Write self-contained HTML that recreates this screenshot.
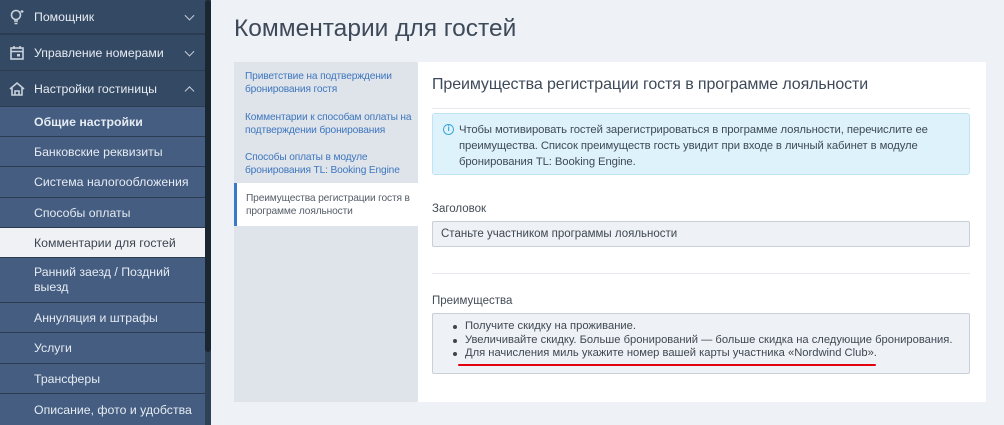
<!DOCTYPE html>
<html><head><meta charset="utf-8"><style>
*{box-sizing:border-box;margin:0;padding:0}
body{width:1004px;height:425px;overflow:hidden;background:#eef1f5;font-family:"Liberation Sans","DejaVu Sans",sans-serif;position:relative}
.sb{position:absolute;left:0;top:0;width:205px;height:425px;background:#2b3b50}
.sc{position:absolute;left:205px;top:0;width:6px;height:425px;background:#2f4157}
.sc i{position:absolute;left:0;top:0;width:6px;height:352px;background:#1b2633;border-radius:3px}
.it{position:absolute;left:0;width:205px;color:#e6ebf2;font-size:12.3px;display:flex;align-items:center}
.top{background:#344a64;padding-left:34px}
.sub{background:#445d81;padding-left:34px}
.act{background:#eff1f4;color:#3c4552}
.chev{position:absolute;right:12px;top:50%;width:7px;height:7px;border-right:1.6px solid #c8d1dc;border-bottom:1.6px solid #c8d1dc;transform:translateY(-70%) rotate(45deg)}
.up{transform:translateY(-20%) rotate(-135deg)}
.ico{position:absolute;left:8px;top:50%;transform:translateY(-50%)}
h1{position:absolute;left:234px;top:15px;font-weight:normal;font-size:24.5px;color:#3e4a5a}
.tabs{position:absolute;left:234px;top:62px;width:184px;height:340px;background:#dfe3ea}
.tab{position:absolute;left:0;width:184px;padding:0 6px 0 11px;font-size:10.2px;letter-spacing:-0.15px;line-height:13px;color:#3d77bf;display:flex;align-items:center}
.tab.a{background:#fff;color:#555d68;border-left:3px solid #3a78c8;padding-left:9px}
.panel{position:absolute;left:418px;top:62px;width:568px;height:340px;background:#fff}
.h2{position:absolute;left:14px;top:14px;font-size:16px;color:#3e4a5a;letter-spacing:-0.1px}
.hr{position:absolute;left:14px;width:538px;height:1px;background:#e6e9ee}
.info{position:absolute;left:14px;top:51px;width:538px;height:62px;background:#def2fb;border:1px solid #bfe3f3;border-radius:3px;font-size:11.3px;letter-spacing:-0.1px;line-height:16px;color:#3f4a56;padding:8px 10px 0 26px}
.info .ic{position:absolute;left:10px;top:10px;width:11px;height:11px;border:1.5px solid #3aa6dc;border-radius:50%;color:#3aa6dc;font-size:8px;line-height:8px;text-align:center;font-weight:bold}
.lbl{position:absolute;left:14px;font-size:11.5px;color:#444c57}
.inp{position:absolute;left:14px;width:538px;background:#eef1f5;border:1px solid #c9cfd8;border-radius:2px;font-size:11.5px;color:#3f4852}
ul{list-style:none}
li{position:relative;padding-left:24px;line-height:13.5px;white-space:nowrap}
li:before{content:"";position:absolute;left:12px;top:5px;width:4px;height:4px;background:#444;border-radius:50%}
</style></head><body>
<div class="sb">
<div class="it top" style="top:0;height:33px"><svg class="ico" width="18" height="18" viewBox="0 0 18 18" fill="none" stroke="#c8d1dc" stroke-width="1.6"><circle cx="8" cy="7" r="4.5"/><path d="M6 13h4M6.5 15.5h3"/><path d="M14 2v3M12.5 3.5h3" stroke-width="1.2"/></svg>Помощник<span class="chev"></span></div>
<div class="it top" style="top:35px;height:35px"><svg class="ico" width="18" height="18" viewBox="0 0 18 18" fill="none" stroke="#c8d1dc" stroke-width="1.6"><rect x="3" y="4" width="12" height="11"/><path d="M3 7.5h12M6 2v3M12 2v3"/><rect x="9" y="10" width="3" height="2.5" fill="#c8d1dc" stroke="none"/></svg>Управление номерами<span class="chev"></span></div>
<div class="it top" style="top:71px;height:35px"><svg class="ico" width="18" height="18" viewBox="0 0 18 18" fill="none" stroke="#c8d1dc" stroke-width="1.6"><path d="M2 9l7-6 7 6M4 8v7h10V8M7 15v-4h4v4"/></svg>Настройки гостиницы<span class="chev up"></span></div>
<div class="it sub" style="top:107px;height:29px;font-weight:bold">Общие настройки</div>
<div class="it sub" style="top:137px;height:29px">Банковские реквизиты</div>
<div class="it sub" style="top:167px;height:30px">Система налогообложения</div>
<div class="it sub" style="top:198px;height:29px">Способы оплаты</div>
<div class="it sub act" style="top:228px;height:29px">Комментарии для гостей</div>
<div class="it sub" style="top:258px;height:44px;line-height:15px">Ранний заезд / Поздний<br>выезд</div>
<div class="it sub" style="top:303px;height:29px">Аннуляция и штрафы</div>
<div class="it sub" style="top:333px;height:30px">Услуги</div>
<div class="it sub" style="top:364px;height:29px">Трансферы</div>
<div class="it sub" style="top:394px;height:31px">Описание, фото и удобства</div>
</div>
<div class="sc"><i></i></div>
<h1>Комментарии для гостей</h1>
<div class="tabs">
<div class="tab" style="top:0;height:42px">Приветствие на подтверждении<br>бронирования гостя</div>
<div class="tab" style="top:42px;height:40px">Комментарии к способам оплаты на<br>подтверждении бронирования</div>
<div class="tab" style="top:82px;height:40px">Способы оплаты в модуле<br>бронирования TL: Booking Engine</div>
<div class="tab a" style="top:121px;height:43px">Преимущества регистрации гостя в<br>программе лояльности</div>
</div>
<div class="panel">
<div class="h2">Преимущества регистрации гостя в программе лояльности</div>
<div class="hr" style="top:46px"></div>
<div class="info"><span class="ic">i</span>Чтобы мотивировать гостей зарегистрироваться в программе лояльности, перечислите ее<br>преимущества. Список преимуществ гость увидит при входе в личный кабинет в модуле<br>бронирования TL: Booking Engine.</div>
<div class="lbl" style="top:141px">Заголовок</div>
<div class="inp" style="top:159px;height:26px;padding:6px 8px">Станьте участником программы лояльности</div>
<div class="hr" style="top:211px"></div>
<div class="lbl" style="top:233px">Преимущества</div>
<div class="inp" style="top:251px;height:61px;padding:6px 8px;font-size:11.2px"><ul><li>Получите скидку на проживание.</li><li>Увеличивайте скидку. Больше бронирований — больше скидка на следующие бронирования.</li><li>Для начисления миль укажите номер вашей карты участника «Nordwind Club».</li></ul></div>
<div style="position:absolute;left:40px;top:302px;width:418px;height:2px;background:#e3000f;border-radius:1px"></div>
</div>
</body></html>
